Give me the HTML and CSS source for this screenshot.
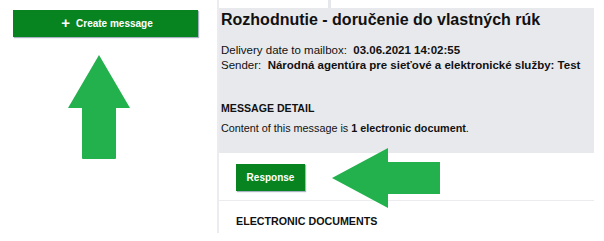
FILE: index.html
```html
<!DOCTYPE html>
<html>
<head>
<meta charset="utf-8">
<link rel="stylesheet" href="styles.css">
</head>
<body>
<div class="layout">
  <aside class="sidebar">
    <button class="btn btn-create"><span class="plus">+</span>Create message</button>
    <svg class="arrow-up" width="64" height="106" viewBox="0 0 64 106">
      <path d="M31 0 L62 53 L48 53 L48 103 Q48 104 47 104 L15 104 Q14 104 14 103 L14 53 L0 53 Z" fill="#22b14c"/>
    </svg>
  </aside>
  <main class="main">
    <div class="topstrip"><span class="tick"></span></div>
    <section class="panel">
      <h1 class="title">Rozhodnutie - doručenie do vlastných rúk</h1>
      <div class="meta">
        <div>Delivery date to mailbox:&nbsp; <b>03.06.2021 14:02:55</b></div>
        <div>Sender:&nbsp; <b>Národná agentúra pre sieťové a elektronické služby: Test</b></div>
      </div>
      <h2 class="section-head">MESSAGE DETAIL</h2>
      <p class="content">Content of this message is <b>1 electronic document</b>.</p>
    </section>
    <section class="actions">
      <button class="btn btn-response">Response</button>
      <svg class="arrow-left" width="110" height="60" viewBox="0 0 110 60">
        <path d="M0 30 L56 0 L56 14 L108 14 L108 46 L56 46 L56 60 Z" fill="#22b14c"/>
      </svg>
    </section>
    <section class="docs">
      <h3 class="docs-head">ELECTRONIC DOCUMENTS</h3>
    </section>
  </main>
</div>
</body>
</html>
```

FILE: styles.css
```css
* { box-sizing: border-box; }
body {
  margin: 0;
  background: #fff;
  font-family: "Liberation Sans", Arial, sans-serif;
  color: #111;
}
.layout {
  display: flex;
  align-items: flex-start;
  width: 604px;
}
.sidebar {
  width: 219px;
  height: 233px;
  padding: 10px 0 0 13px;
  border-right: 2px solid #ececf0;
  position: relative;
}
.btn {
  border: none;
  background: #078420;
  color: #fff;
  font-family: "Liberation Sans", Arial, sans-serif;
  font-weight: bold;
  font-size: 10px;
  box-shadow: 1px 1px 1px #a9b2c2;
  cursor: pointer;
}
.btn-create {
  width: 185px;
  height: 27px;
  display: flex;
  align-items: center;
  justify-content: center;
  padding: 0 0 0 3px;
}
.plus {
  font-size: 15px;
  line-height: 1;
  margin-right: 6px;
  margin-top: -2px;
}
.arrow-up {
  display: block;
  margin: 18px 0 0 55px;
}
.main {
  width: 376px;
  margin-left: -1px;
}
.topstrip {
  height: 8px;
  padding-left: 110px;
}
.tick {
  display: block;
  width: 3px;
  height: 8px;
  background: #e6e7eb;
}
.panel {
  background: #e8e9ed;
  height: 145px;
  padding: 2px 0 0 3px;
}
.title {
  margin: 0;
  font-size: 16px;
  line-height: 19px;
  font-weight: bold;
}
.meta {
  margin-top: 14px;
  font-size: 11.5px;
  line-height: 15px;
}
.section-head {
  margin: 28px 0 0;
  font-size: 10.6px;
  line-height: 14px;
  font-weight: bold;
}
.content {
  margin: 6px 0 0;
  font-size: 10.8px;
  line-height: 14px;
}
.actions {
  height: 48px;
  border-bottom: 1px solid #ececef;
  display: flex;
  align-items: flex-start;
  padding: 11px 0 0 18px;
  position: relative;
}
.btn-response {
  width: 69px;
  height: 27px;
  padding: 0;
}
.arrow-left {
  position: absolute;
  left: 114px;
  top: -5px;
}
.docs {
  padding: 13px 0 0 18px;
}
.docs-head {
  margin: 0;
  font-size: 10.7px;
  font-weight: bold;
  line-height: 14px;
}
```
